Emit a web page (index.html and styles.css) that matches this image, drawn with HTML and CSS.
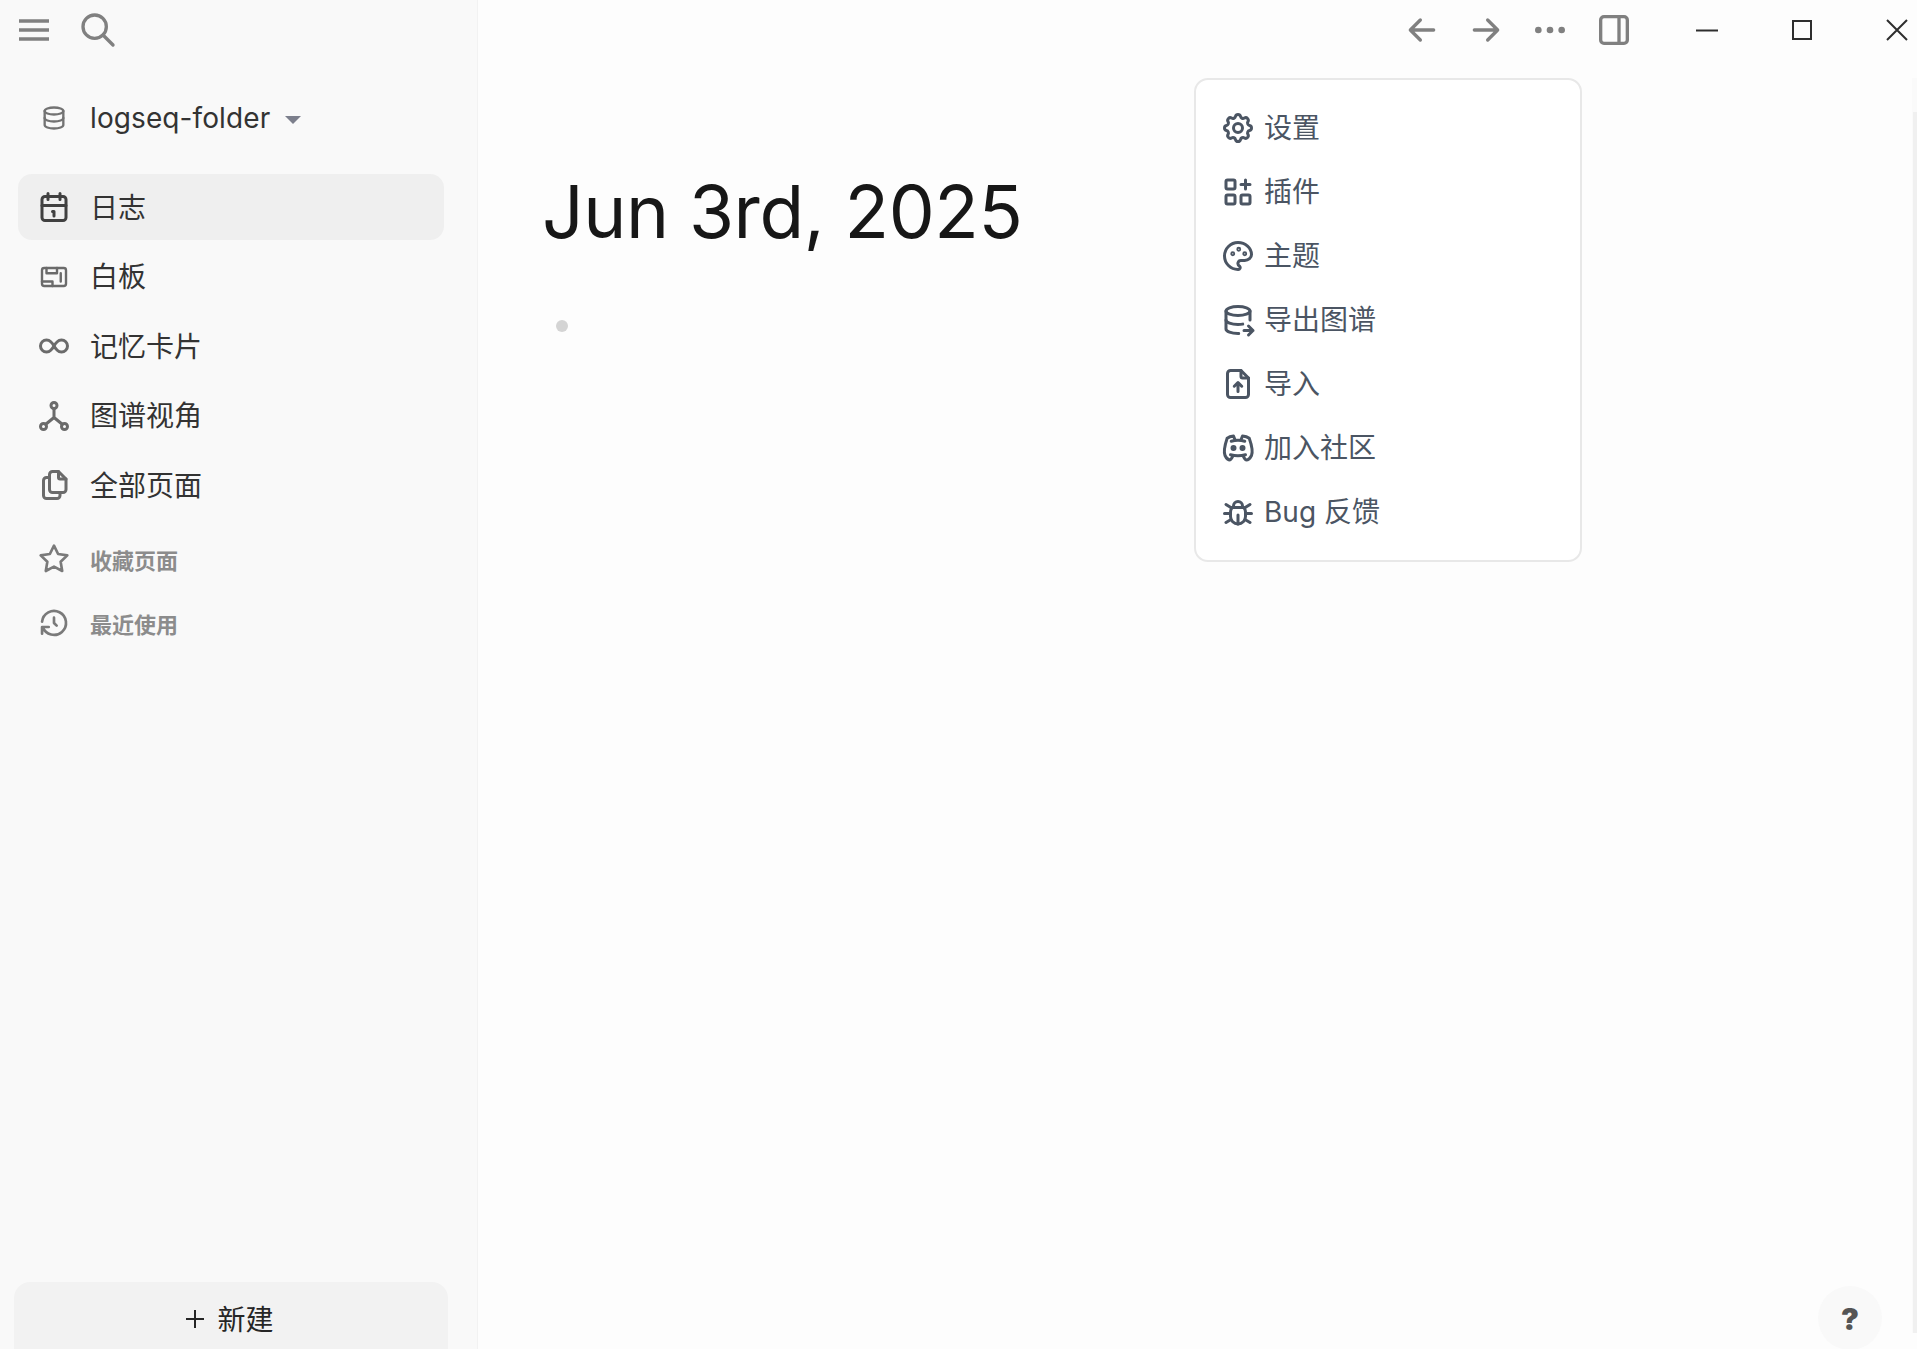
FILE: index.html
```html
<!DOCTYPE html>
<html lang="zh-CN">
<head>
  <meta charset="UTF-8">
  <title>logseq-folder</title>
  <link rel="stylesheet" href="styles.css">
</head>
<body>
<aside class="sidebar">
  <div class="side-top">
    <svg class="menu-icon" viewBox="0 0 30 24"><path d="M0 3h30M0 12h30M0 21h30"/></svg>
    <svg class="icon-40" viewBox="0 0 24 24"><circle cx="10" cy="10" r="7"/><path d="M21 21l-6-6"/></svg>
  </div>

  <div class="repo">
    <svg class="icon-28" viewBox="0 0 24 24"><ellipse cx="12" cy="6" rx="8" ry="3"/><path d="M4 6v6a8 3 0 0 0 16 0V6"/><path d="M4 12v6a8 3 0 0 0 16 0v-6"/></svg>
    <span class="repo-name">logseq-folder</span>
    <span class="caret"></span>
  </div>

  <nav class="nav">
    <a class="nav-item active">
      <svg viewBox="0 0 24 24"><rect x="4" y="5" width="16" height="16" rx="2"/><path d="M16 3v4M8 3v4M4 11h16M11 15h1M12 15v3"/></svg>
      <span>日志</span>
    </a>
    <a class="nav-item">
      <svg class="thin" viewBox="0 0 24 24"><rect x="4" y="6" width="16" height="12" rx="1.5"/><path d="M7 6v3.500h7V6M4 15h7v3M16.500 9.500v5.500"/></svg>
      <span>白板</span>
    </a>
    <a class="nav-item">
      <svg viewBox="0 0 24 24"><path d="M9.828 9.172a4 4 0 1 0 0 5.656a10 10 0 0 0 2.172 -2.828a10 10 0 0 1 2.172 -2.828a4 4 0 1 1 0 5.656a10 10 0 0 1 -2.172 -2.828a10 10 0 0 0 -2.172 -2.828"/></svg>
      <span>记忆卡片</span>
    </a>
    <a class="nav-item">
      <svg viewBox="0 0 24 24"><circle cx="12" cy="5" r="2"/><circle cx="5" cy="19" r="2"/><circle cx="19" cy="19" r="2"/><path d="M6.500 17.500l5.500-4.500l5.500 4.500M12 7v6"/></svg>
      <span>图谱视角</span>
    </a>
    <a class="nav-item">
      <svg viewBox="0 0 24 24"><path d="M15 3v4a1 1 0 0 0 1 1h4"/><path d="M18 17h-7a2 2 0 0 1 -2 -2v-10a2 2 0 0 1 2 -2h4l5 5v7a2 2 0 0 1 -2 2z"/><path d="M16 17v2a2 2 0 0 1 -2 2h-7a2 2 0 0 1 -2 -2v-10a2 2 0 0 1 2 -2h2"/></svg>
      <span>全部页面</span>
    </a>
  </nav>

  <div class="side-group">
    <a class="group-item">
      <svg viewBox="0 0 24 24"><path d="M12 17.750l-6.172 3.245l1.179 -6.873l-5 -4.867l6.900 -1l3.086 -6.253l3.086 6.253l6.900 1l-5 4.867l1.179 6.873z"/></svg>
      <span>收藏页面</span>
    </a>
    <a class="group-item">
      <svg viewBox="0 0 24 24"><path d="M12 8v4l2 2"/><path d="M3.050 11a9 9 0 1 1 .5 4m-.5 5v-5h5"/></svg>
      <span>最近使用</span>
    </a>
  </div>

  <button class="new-btn">
    <svg viewBox="0 0 18 18"><path d="M0 9h18M9 0v18"/></svg>
    <span>新建</span>
  </button>
</aside>

<main class="main">
  <header class="toolbar">
    <button class="tool-btn"><svg class="icon-40" viewBox="0 0 24 24"><path d="M5 12h14M5 12l6 6M5 12l6-6"/></svg></button>
    <button class="tool-btn"><svg class="icon-40" viewBox="0 0 24 24"><path d="M5 12h14M13 18l6-6M13 6l6 6"/></svg></button>
    <button class="tool-btn"><svg class="icon-40 solid" viewBox="0 0 24 24"><circle cx="5" cy="12" r="1"/><circle cx="12" cy="12" r="1"/><circle cx="19" cy="12" r="1"/></svg></button>
    <button class="tool-btn"><svg class="icon-40" viewBox="0 0 24 24"><rect x="4" y="4" width="16" height="16" rx="2"/><path d="M15 4v16"/></svg></button>
    <div class="win-controls">
      <button class="win-btn"><svg viewBox="0 0 22 22"><path d="M0 11.500h22"/></svg></button>
      <button class="win-btn"><svg viewBox="0 0 22 22"><rect x="2" y="2" width="18" height="18"/></svg></button>
      <button class="win-btn"><svg viewBox="0 0 22 22"><path d="M1 1l20 20M21 1l-20 20"/></svg></button>
    </div>
  </header>

  <section class="journal">
    <h1>Jun 3rd, 2025</h1>
    <div class="bullet"></div>
  </section>

  <div class="dropdown">
    <a class="drop-item">
      <svg viewBox="0 0 24 24"><path d="M10.325 4.317c.426 -1.756 2.924 -1.756 3.350 0a1.724 1.724 0 0 0 2.573 1.066c1.543 -.94 3.310 .826 2.370 2.370a1.724 1.724 0 0 0 1.065 2.572c1.756 .426 1.756 2.924 0 3.350a1.724 1.724 0 0 0 -1.066 2.573c.94 1.543 -.826 3.310 -2.370 2.370a1.724 1.724 0 0 0 -2.572 1.065c-.426 1.756 -2.924 1.756 -3.350 0a1.724 1.724 0 0 0 -2.573 -1.066c-1.543 .94 -3.310 -.826 -2.370 -2.370a1.724 1.724 0 0 0 -1.065 -2.572c-1.756 -.426 -1.756 -2.924 0 -3.350a1.724 1.724 0 0 0 1.066 -2.573c-.94 -1.543 .826 -3.310 2.370 -2.370c1 .608 2.296 .07 2.572 -1.065z"/><circle cx="12" cy="12" r="3"/></svg>
      <span>设置</span>
    </a>
    <a class="drop-item">
      <svg viewBox="0 0 24 24"><rect x="4" y="4" width="6" height="6" rx="1"/><rect x="4" y="14" width="6" height="6" rx="1"/><rect x="14" y="14" width="6" height="6" rx="1"/><path d="M14 7h6M17 4v6"/></svg>
      <span>插件</span>
    </a>
    <a class="drop-item">
      <svg viewBox="0 0 24 24"><path d="M12 21a9 9 0 0 1 0 -18c4.970 0 9 3.582 9 8c0 1.060 -.474 2.078 -1.318 2.828c-.844 .75 -1.989 1.172 -3.182 1.172h-2.500a2 2 0 0 0 -1 3.750a1.300 1.300 0 0 1 -1 2.250"/><circle cx="8.500" cy="10.500" r=".6"/><circle cx="12.500" cy="7.500" r=".6"/><circle cx="16.500" cy="10.500" r=".6"/></svg>
      <span>主题</span>
    </a>
    <a class="drop-item">
      <svg viewBox="0 0 24 24"><path d="M4 6c0 1.657 3.582 3 8 3s8 -1.343 8 -3s-3.582 -3 -8 -3s-8 1.343 -8 3"/><path d="M4 6v6c0 1.657 3.582 3 8 3c1.118 0 2.183 -.086 3.150 -.241"/><path d="M20 12v-6"/><path d="M4 12v6c0 1.657 3.582 3 8 3c.157 0 .312 -.002 .466 -.005"/><path d="M16 19h6M19 16l3 3l-3 3"/></svg>
      <span>导出图谱</span>
    </a>
    <a class="drop-item">
      <svg viewBox="0 0 24 24"><path d="M14 3v4a1 1 0 0 0 1 1h4"/><path d="M17 21h-10a2 2 0 0 1 -2 -2v-14a2 2 0 0 1 2 -2h7l5 5v11a2 2 0 0 1 -2 2z"/><path d="M12 11v6M9.500 13.500l2.500 -2.500l2.500 2.500"/></svg>
      <span>导入</span>
    </a>
    <a class="drop-item">
      <svg viewBox="0 0 24 24"><circle cx="9" cy="12" r="1"/><circle cx="15" cy="12" r="1"/><path d="M7.500 7.500c3.500 -1 5.500 -1 9 0"/><path d="M7 16.500c3.500 1 6.500 1 10 0"/><path d="M15.500 17c0 1 1.500 3 2 3c1.500 0 2.833 -1.667 3.500 -3c.667 -1.667 .5 -5.833 -1.500 -11.500c-1.457 -1.015 -3 -1.340 -4.500 -1.500l-1 2.500"/><path d="M8.500 17c0 1 -1.356 3 -1.832 3c-1.429 0 -2.698 -1.667 -3.333 -3c-.635 -1.667 -.476 -5.833 1.428 -11.500c1.388 -1.015 2.782 -1.340 4.237 -1.500l1 2.500"/></svg>
      <span>加入社区</span>
    </a>
    <a class="drop-item">
      <svg viewBox="0 0 24 24"><path d="M9 9v-1a3 3 0 0 1 6 0v1"/><path d="M8 9h8a6 6 0 0 1 1 3v3a5 5 0 0 1 -10 0v-3a6 6 0 0 1 1 -3"/><path d="M3 13h4M17 13h4M12 20v-6M4 19l3.350 -2M20 19l-3.350 -2M4 7l3.750 2.400M20 7l-3.750 2.400"/></svg>
      <span>Bug 反馈</span>
    </a>
  </div>

  <div class="scroll-track"><div class="scroll-thumb"></div></div>
  <button class="help-btn">?</button>
</main>
</body>
</html>
```

FILE: styles.css
```css
* {
  box-sizing: border-box;
}
body {
  margin: 0;
  height: 100vh;
  display: flex;
  overflow: hidden;
  background-color: #fdfdfd;
  color: #262626;
  font-family: Inter, "Noto Sans CJK SC", sans-serif;
}
svg {
  display: block;
  flex: none;
  fill: none;
  stroke: currentColor;
  stroke-width: 2;
  stroke-linecap: round;
  stroke-linejoin: round;
}
button {
  border: none;
  padding: 0;
  background: none;
  font-family: inherit;
  color: inherit;
}

/* sidebar */
.sidebar {
  width: 478px;
  flex: none;
  display: flex;
  flex-direction: column;
  background-color: #f9f9f9;
  border-right: 1px solid #f2f2f2;
}
.side-top {
  height: 60px;
  display: flex;
  align-items: center;
  padding-left: 19px;
  gap: 29px;
  color: #808080;
}
.menu-icon {
  width: 30px;
  height: 24px;
  stroke-width: 3.500;
  stroke-linecap: butt;
}
.icon-40 {
  width: 40px;
  height: 40px;
}
.icon-28 {
  width: 28px;
  height: 28px;
  color: #737373;
}
.repo {
  height: 60px;
  margin-top: 28px;
  display: flex;
  align-items: center;
  padding-left: 40px;
}
.repo-name {
  margin-left: 22px;
  font-size: 28px;
  letter-spacing: .1px;
  color: #333;
}
.caret {
  margin-left: 15px;
  margin-top: 4px;
  border-left: 8px solid transparent;
  border-right: 8px solid transparent;
  border-top: 8px solid #7c7f8c;
}
.nav {
  margin: 26px 33px 0 18px;
  display: flex;
  flex-direction: column;
  gap: 3.500px;
}
.nav-item {
  height: 66px;
  display: flex;
  align-items: center;
  gap: 18px;
  padding-left: 18px;
  border-radius: 14px;
  font-size: 28px;
  color: #333;
}
.nav-item span {
  margin-bottom: 3px;
}
.nav-item svg {
  width: 36px;
  height: 36px;
  color: #6b6b6b;
}
.nav-item svg.thin {
  stroke-width: 1.600;
}
.nav-item.active {
  background-color: #efefef;
}
.nav-item.active svg {
  color: #404040;
}
.side-group {
  margin: 9px 33px 0 18px;
}
.group-item {
  height: 64px;
  display: flex;
  align-items: center;
  gap: 20px;
  padding-left: 20px;
  font-size: 22px;
  font-weight: 600;
  color: #8c8c8c;
}
.group-item svg {
  width: 32px;
  height: 32px;
  color: #7a7a7a;
}
.new-btn {
  height: 67px;
  margin: auto 29px 0 14px;
  padding: 7px 2px 0 0;
  display: flex;
  align-items: center;
  justify-content: center;
  gap: 13px;
  border-radius: 16px 16px 0 0;
  background-color: #f2f2f2;
  font-size: 28px;
  color: #262626;
}
.new-btn svg {
  width: 18px;
  height: 18px;
  stroke-linecap: butt;
}
.new-btn span {
  margin-bottom: 3px;
}

/* main area */
.main {
  flex: 1;
  position: relative;
}
.toolbar {
  height: 60px;
  margin-right: -27px;
  display: flex;
  justify-content: flex-end;
  align-items: center;
  color: #808080;
}
.tool-btn {
  width: 64px;
  height: 60px;
  display: flex;
  align-items: center;
  justify-content: center;
}
.win-controls {
  display: flex;
  margin-left: 13px;
  color: #2e2e2e;
}
.win-btn {
  width: 95px;
  height: 60px;
  display: flex;
  align-items: center;
  justify-content: center;
}
.win-btn svg {
  width: 22px;
  height: 22px;
  stroke-linecap: butt;
  stroke-linejoin: miter;
}
.journal {
  padding: 107px 0 0 64px;
}
.journal h1 {
  margin: 0;
  font-size: 73px;
  line-height: 90px;
  font-weight: 400;
  letter-spacing: -.4px;
  color: #171717;
}
.bullet {
  width: 12px;
  height: 12px;
  margin: 63px 0 0 14px;
  border-radius: 50%;
  background-color: #d4d4d4;
}
.dropdown {
  position: absolute;
  top: 78px;
  left: 716px;
  width: 388px;
  height: 484px;
  padding: 16px 24px;
  background-color: #fff;
  border: 2px solid #e8e8e8;
  border-radius: 14px;
}
.drop-item {
  height: 64px;
  display: flex;
  align-items: center;
  gap: 8px;
  font-size: 28px;
  color: #4b5563;
}
.drop-item span {
  margin-bottom: 4px;
}
.drop-item svg {
  width: 36px;
  height: 36px;
}
.scroll-track {
  position: absolute;
  top: 78px;
  right: 0;
  width: 5px;
  height: 1255px;
  background-color: #fafafa;
}
.scroll-thumb {
  margin: 34px 0 0 1px;
  height: 1221px;
  background-color: #f0f0f0;
}
.help-btn {
  position: absolute;
  right: 35px;
  bottom: -1px;
  width: 64px;
  height: 64px;
  padding-top: 2px;
  border-radius: 50%;
  background-color: #f9f9f9;
  font-size: 30px;
  font-weight: 900;
  color: #555;
}
```
